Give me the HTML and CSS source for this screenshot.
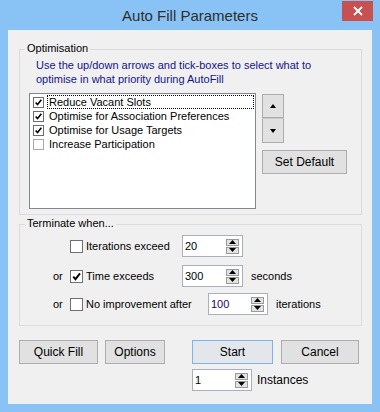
FILE: index.html
```html
<!DOCTYPE html>
<html>
<head>
<meta charset="utf-8">
<link rel="stylesheet" href="styles.css">
</head>
<body>
<div class="window">
  <div class="titlebar">
    <span class="title">Auto Fill Parameters</span>
    <span class="close"><svg width="10" height="10" viewBox="0 0 10 10"><path d="M1 1 L9 9 M9 1 L1 9" stroke="#fff" stroke-width="1.8"/></svg></span>
  </div>
  <div class="client">
    <div class="group g-opt">
      <div class="gtitle">Optimisation</div>
      <div class="desc">Use the up/down arrows and tick-boxes to select what to<br>optimise in what priority during AutoFill</div>
      <div class="opt-row">
        <div class="listbox">
          <div class="item"><span class="cb on"><svg viewBox="0 0 11 11"><path d="M2 5.5 L4.3 8 L9 2.2" stroke="#000" stroke-width="1.9" fill="none"/></svg></span><span class="itext focus">Reduce Vacant Slots</span></div>
          <div class="item"><span class="cb on"><svg viewBox="0 0 11 11"><path d="M2 5.5 L4.3 8 L9 2.2" stroke="#000" stroke-width="1.9" fill="none"/></svg></span><span class="itext">Optimise for Association Preferences</span></div>
          <div class="item"><span class="cb on"><svg viewBox="0 0 11 11"><path d="M2 5.5 L4.3 8 L9 2.2" stroke="#000" stroke-width="1.9" fill="none"/></svg></span><span class="itext">Optimise for Usage Targets</span></div>
          <div class="item"><span class="cb off"></span><span class="itext">Increase Participation</span></div>
        </div>
        <div class="side">
          <div class="btn arrow up"><svg width="6" height="4" viewBox="0 0 6 4"><path d="M0 4 L3 0 L6 4 Z" fill="#000"/></svg></div>
          <div class="btn arrow down"><svg width="6" height="4" viewBox="0 0 6 4"><path d="M0 0 L3 4 L6 0 Z" fill="#000"/></svg></div>
          <div class="btn setdef">Set Default</div>
        </div>
      </div>
    </div>

    <div class="group g-term">
      <div class="gtitle">Terminate when...</div>
      <div class="trow r1">
        <span class="or"></span>
        <span class="tcb"></span>
        <span class="tlabel w96">Iterations exceed</span>
        <div class="spin w61"><span class="val">20</span><span class="spbtns"><span class="sp"><svg width="7" height="4" viewBox="0 0 7 4"><path d="M0 4 L3.5 0 L7 4 Z" fill="#000"/></svg></span><span class="sp"><svg width="7" height="4" viewBox="0 0 7 4"><path d="M0 0 L3.5 4 L7 0 Z" fill="#000"/></svg></span></span></div>
      </div>
      <div class="trow r2">
        <span class="or">or</span>
        <span class="tcb"><svg viewBox="0 0 11 11"><path d="M2.2 5.6 L4.5 8.2 L9 2.4" stroke="#000" stroke-width="1.9" fill="none"/></svg></span>
        <span class="tlabel w96">Time exceeds</span>
        <div class="spin w61"><span class="val">300</span><span class="spbtns"><span class="sp"><svg width="7" height="4" viewBox="0 0 7 4"><path d="M0 4 L3.5 0 L7 4 Z" fill="#000"/></svg></span><span class="sp"><svg width="7" height="4" viewBox="0 0 7 4"><path d="M0 0 L3.5 4 L7 0 Z" fill="#000"/></svg></span></span></div>
        <span class="after">seconds</span>
      </div>
      <div class="trow r3">
        <span class="or">or</span>
        <span class="tcb"></span>
        <span class="tlabel w122">No improvement after</span>
        <div class="spin w60"><span class="val purple">100</span><span class="spbtns"><span class="sp"><svg width="7" height="4" viewBox="0 0 7 4"><path d="M0 4 L3.5 0 L7 4 Z" fill="#000"/></svg></span><span class="sp"><svg width="7" height="4" viewBox="0 0 7 4"><path d="M0 0 L3.5 4 L7 0 Z" fill="#000"/></svg></span></span></div>
        <span class="after">iterations</span>
      </div>
    </div>

    <div class="buttons">
      <div class="btn big quick">Quick Fill</div>
      <div class="btn big options">Options</div>
      <div class="btn big start">Start</div>
      <div class="btn big cancel">Cancel</div>
    </div>
    <div class="inst-row">
      <div class="spin w60"><span class="val">1</span><span class="spbtns"><span class="sp"><svg width="7" height="4" viewBox="0 0 7 4"><path d="M0 4 L3.5 0 L7 4 Z" fill="#000"/></svg></span><span class="sp"><svg width="7" height="4" viewBox="0 0 7 4"><path d="M0 0 L3.5 4 L7 0 Z" fill="#000"/></svg></span></span></div>
      <span class="inst-label">Instances</span>
    </div>
  </div>
</div>
</body>
</html>
```

FILE: styles.css
```css
html, body {
  margin: 0;
  padding: 0;
}
body {
  background: #89c3f5;
  font-family: "Liberation Sans", Arial, sans-serif;
  color: #000;
}
.window {
  width: 380px;
  height: 412px;
  position: relative;
  display: flex;
  flex-direction: column;
  overflow: hidden;
}
.titlebar {
  height: 30px;
  display: flex;
  align-items: center;
  justify-content: center;
}
.title {
  font-size: 15px;
  color: #2e2e2e;
}
.close {
  position: absolute;
  top: 1px;
  right: 7px;
  width: 31px;
  height: 20px;
  background: #c75050;
  display: flex;
  align-items: center;
  justify-content: center;
}
.close svg { display: block; }
.client {
  margin: 0 8px;
  height: 374px;
  background: #f0f0f0;
  padding: 19px 10px 0 11px;
  box-sizing: border-box;
  position: relative;
}
.group {
  border: 1px solid #dcdcdc;
  width: 343px;
  box-sizing: border-box;
}
.gtitle {
  display: block;
  width: fit-content;
  margin-top: -9px;
  margin-left: 5px;
  padding: 0 2px;
  background: #f0f0f0;
  font-size: 11px;
  line-height: 14px;
  height: 14px;
}
.g-opt {
  padding-bottom: 5px;
}
.desc {
  margin-top: 3px;
  padding-left: 16px;
  font-size: 11px;
  line-height: 14px;
  color: #14148c;
}
.opt-row {
  margin-top: 7px;
  padding-left: 9px;
  display: flex;
  align-items: flex-start;
}
.listbox {
  width: 227px;
  height: 116px;
  box-sizing: border-box;
  border: 1px solid #828790;
  background: #fff;
  padding: 1px 1px 0 3px;
}
.item {
  height: 14px;
  display: flex;
  align-items: center;
  font-size: 11px;
}
.cb {
  width: 11px;
  height: 11px;
  box-sizing: border-box;
  border: 1px solid #6d6d6d;
  background: #fff;
  margin-right: 3px;
  flex: none;
  display: flex;
}
.cb.off { border-color: #a9a9a9; }
.cb svg, .tcb svg { width: 100%; height: 100%; display: block; }
.itext {
  flex: 1;
  height: 14px;
  line-height: 13px;
  box-sizing: border-box;
  padding-left: 1px;
  border: 1px solid transparent;
}
.itext.focus {
  border: 1px dotted #000;
}
.side {
  margin-left: 6px;
  margin-top: 1px;
  display: flex;
  flex-direction: column;
}
.btn {
  background: #e1e1e1;
  border: 1px solid #adadad;
  box-sizing: border-box;
  display: flex;
  align-items: center;
  justify-content: center;
  font-size: 12px;
}
.arrow {
  width: 22px;
}
.arrow svg { display: block; }
.arrow.up { height: 24px; }
.arrow.down { height: 25px; border-top-color: #c8c8c8; }
.setdef {
  margin-top: 7px;
  width: 85px;
  height: 24px;
}
.g-term {
  margin-top: 9px;
  padding-bottom: 10px;
}
.trow {
  display: flex;
  align-items: center;
  height: 22px;
  font-size: 11px;
}
.trow.r1 { margin-top: 5px; }
.trow.r2 { margin-top: 8px; }
.trow.r3 { margin-top: 6px; }
.or {
  width: 17px;
  margin-left: 33px;
  font-size: 11px;
}
.tcb {
  width: 13px;
  height: 13px;
  box-sizing: border-box;
  border: 1px solid #707070;
  background: #fff;
  margin-right: 3px;
  display: flex;
  padding: 0;
}
.tlabel { font-size: 11px; }
.w96 { width: 96px; }
.w122 { width: 122px; }
.spin {
  height: 22px;
  box-sizing: border-box;
  border: 1px solid #a8b0bc;
  background: #fff;
  display: flex;
  align-items: center;
  padding-left: 2px;
  font-size: 11px;
}
.w61 { width: 61px; }
.w60 { width: 60px; }
.val { flex: 1; font-size: 11px; }
.val.purple { color: #300060; }
.spbtns {
  display: flex;
  flex-direction: column;
  gap: 1px;
  margin-right: 3px;
}
.sp {
  width: 13px;
  height: 7px;
  box-sizing: border-box;
  background: #e3e3e3;
  border: 1px solid #9a9a9a;
  display: flex;
  align-items: center;
  justify-content: center;
}
.sp svg { display: block; }
.after {
  margin-left: 8px;
  font-size: 11px;
}
.buttons {
  margin-top: 14px;
  display: flex;
}
.big { height: 24px; font-size: 12px; }
.quick { width: 79px; }
.options { width: 60px; margin-left: 7px; }
.start { width: 81px; margin-left: 27px; border-color: #7fb4ea; background: #e3e6ea; }
.cancel { width: 78px; margin-left: 8px; }
.inst-row {
  margin-top: 5px;
  margin-left: 173px;
  display: flex;
  align-items: center;
}
.inst-label {
  margin-left: 5px;
  font-size: 12px;
}
```
